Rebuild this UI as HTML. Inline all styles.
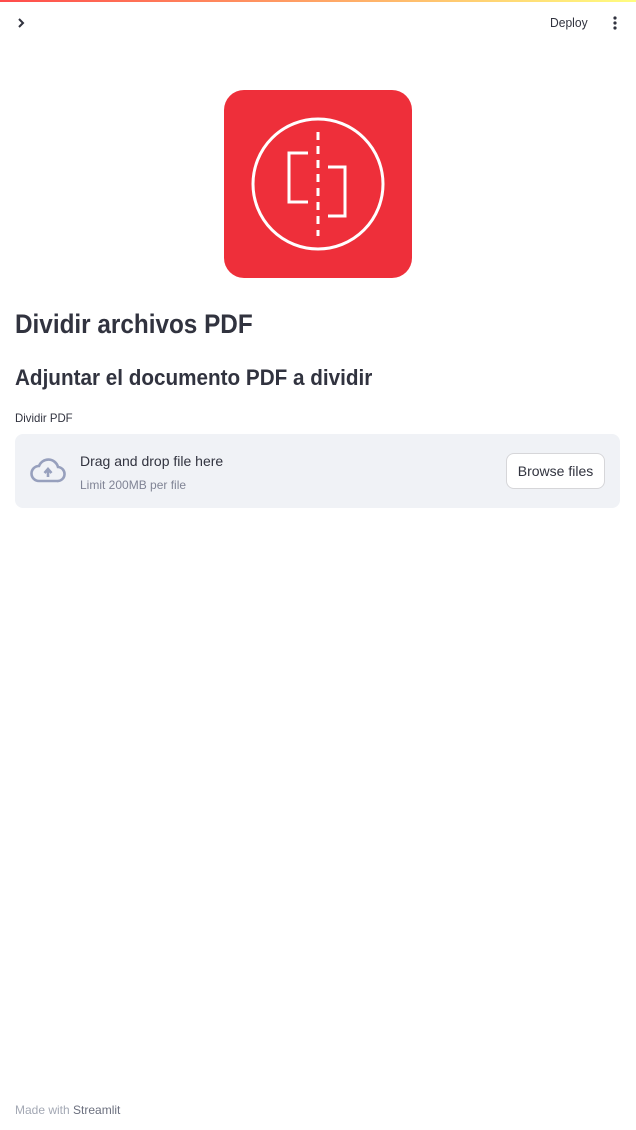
<!DOCTYPE html>
<html><head><meta charset="utf-8"><style>
*{margin:0;padding:0;box-sizing:border-box}
body{width:636px;height:1130px;background:#fff;font-family:"Liberation Sans",sans-serif;color:#31333f;position:relative;overflow:hidden}
.bar{position:absolute;top:0;left:0;width:636px;height:2px;background:linear-gradient(90deg,#ff4b4b,#fffd80)}
.abs{position:absolute;white-space:nowrap}
.sx{transform-origin:left top}
</style></head><body>
<div class="bar"></div>
<svg class="abs" style="left:14px;top:16px" width="14" height="14" viewBox="0 0 14 14"><path d="M5 3l4 4-4 4" fill="none" stroke="#31333f" stroke-width="2"/></svg>
<div class="abs sx" style="left:550px;top:15px;font-size:13px;transform:scaleX(0.93)">Deploy</div>
<svg class="abs" style="left:611px;top:15px" width="8" height="16"><circle cx="4" cy="3" r="1.6" fill="#31333f"/><circle cx="4" cy="8" r="1.6" fill="#31333f"/><circle cx="4" cy="13" r="1.6" fill="#31333f"/></svg>
<svg class="abs" style="left:224px;top:90px" width="188" height="188" viewBox="0 0 188 188">
<rect width="188" height="188" rx="20" fill="#ee2f3a"/>
<circle cx="94" cy="94" r="65" fill="none" stroke="#fff" stroke-width="3"/>
<line x1="94" y1="42" x2="94" y2="146" stroke="#fff" stroke-width="3" stroke-dasharray="8,6"/>
<path d="M84 63H65V112H84" fill="none" stroke="#fff" stroke-width="3"/>
<path d="M104 77H121V126H104" fill="none" stroke="#fff" stroke-width="3"/>
</svg>
<div class="abs sx" style="left:15px;top:309px;font-size:27px;font-weight:bold;transform:scaleX(0.9)">Dividir archivos PDF</div>
<div class="abs sx" style="left:15px;top:365px;font-size:22px;font-weight:bold;transform:scaleX(0.94)">Adjuntar el documento PDF a dividir</div>
<div class="abs sx" style="left:15px;top:411px;font-size:12px;transform:scaleX(0.95)">Dividir PDF</div>
<div class="abs" style="left:15px;top:434px;width:605px;height:74px;background:#f0f2f6;border-radius:8px"></div>
<svg class="abs" style="left:30px;top:458px" width="36" height="26" viewBox="0 0 36 26"><path d="M9 23H27a7 7 0 0 0 1-14 10 10 0 0 0-19-1 7.5 7.5 0 0 0 0 15z" fill="none" stroke="#97a0bd" stroke-width="2.6"/><path d="M18 19v-7M14.5 15l3.5-4 3.5 4" fill="none" stroke="#97a0bd" stroke-width="2.6"/></svg>
<div class="abs" style="left:80px;top:453px;font-size:14px">Drag and drop file here</div>
<div class="abs" style="left:80px;top:478px;font-size:12px;color:#808495">Limit 200MB per file</div>
<div class="abs" style="left:506px;top:453px;width:99px;height:36px;border:1px solid #d6d6d9;border-radius:8px;background:#fff;font-size:14px;text-align:center;line-height:34px">Browse files</div>
<div class="abs" style="left:15px;top:1103px;font-size:12px;color:#a3a8b4">Made with <span style="color:#6b6f7e">Streamlit</span></div>
</body></html>
